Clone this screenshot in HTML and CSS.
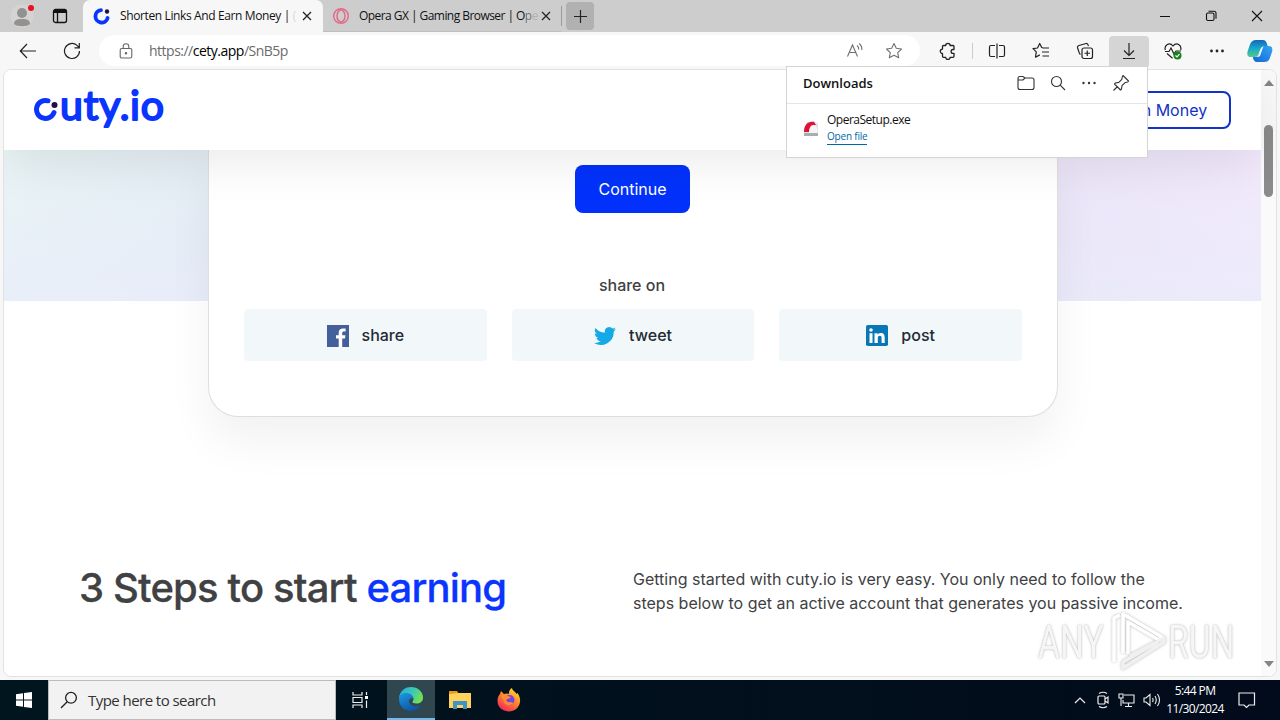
FILE: index.html
```html
<!DOCTYPE html>
<html lang="en">
<head>
  <meta charset="UTF-8">
  <meta name="viewport" content="width=device-width, initial-scale=1.0">
  <title>Shorten Links And Earn Money</title>
  <link rel="stylesheet" href="styles.css">
</head>
<body>
  <div class="titlebar">
    <svg class="profile" width="24" height="24" viewBox="0 0 24 24">
      <circle cx="12" cy="12" r="11.5" fill="#d6d3d0"/>
      <circle cx="12" cy="9" r="5" fill="#929292"/>
      <path d="M4 20c0-4 3-5 8-5s8 1 8 5c-3 3-13 3-16 0z" fill="#929292"/>
      <circle cx="21" cy="4" r="3" fill="#e81123"/>
    </svg>
    <svg class="workspaces" width="16" height="16" viewBox="0 0 16 16" fill="none" stroke="#111" stroke-width="1.3">
      <rect x="1.5" y="1.5" width="13" height="13" rx="2"/>
      <path d="M2 3.500h12" stroke-width="3"/>
      <path d="M5.500 4v10"/>
    </svg>
    <div class="tab active">
      <svg width="18" height="18" viewBox="0 0 18 18" fill="none">
        <path d="M8 3.200A6.200 6.200 0 1 0 14.600 11" stroke="#0a35ff" stroke-width="3.800" stroke-linecap="round"/>
        <circle cx="14" cy="4.500" r="2.200" fill="#251044"/>
      </svg>
      <span class="tab_title first">Shorten Links And Earn Money | <i class="faint">(</i></span>
      <svg class="close" width="10" height="10" viewBox="0 0 10 10" stroke="#222" stroke-width="1.300"><path d="M1 1l8 8M9 1l-8 8"/></svg>
    </div>
    <div class="tab">
      <svg width="18" height="18" viewBox="0 0 18 18" fill="none" stroke="#e36b85">
        <circle cx="9" cy="9" r="7.300" stroke-width="1.500"/>
        <ellipse cx="9" cy="9" rx="4" ry="6" stroke-width="1.500"/>
      </svg>
      <span class="tab_title second">Opera GX | Gaming Browser | O<i class="half">p</i><i class="faint">e</i></span>
      <svg class="close" width="10" height="10" viewBox="0 0 10 10" stroke="#222" stroke-width="1.200"><path d="M1 1l8 8M9 1l-8 8"/></svg>
    </div>
    <i class="tab_divider"></i>
    <div class="new_tab">
      <svg width="15" height="15" viewBox="0 0 15 15" stroke="#222" stroke-width="1.200"><path d="M7.500 1v13M1 7.500h13"/></svg>
    </div>
    <div class="window_buttons">
      <svg width="12" height="12" viewBox="0 0 12 12"><path d="M1 6.500h10" stroke="#111"/></svg>
      <svg width="12" height="12" viewBox="0 0 12 12" fill="none" stroke="#111" stroke-width="1.100"><rect x="1.500" y="3" width="7.500" height="7.500" rx="1.500"/><path d="M3.500 1.200H9q2 0 2 2v5.500"/></svg>
      <svg width="12" height="12" viewBox="0 0 12 12" stroke="#111" stroke-width="1.100"><path d="M1 1l10 10M11 1L1 11"/></svg>
    </div>
  </div>

  <div class="toolbar">
    <svg class="back" width="18" height="16" viewBox="0 0 18 16" fill="none" stroke="#222" stroke-width="1.200"><path d="M17 8H1.500M8 1L1.300 8 8 15"/></svg>
    <svg class="reload" width="18" height="18" viewBox="0 0 18 18" fill="none" stroke="#222" stroke-width="1.200"><path d="M16.500 9A7.500 7.500 0 1 1 14 3.400L16.200 5.600M16.300 1v4.800h-4.800"/></svg>
    <div class="address">
      <svg width="14" height="16" viewBox="0 0 14 16" fill="none" stroke="#666" stroke-width="1.100"><rect x="1.200" y="5.500" width="11.600" height="9.500" rx="1.600"/><path d="M4.200 5.500V3.600a2.800 2.800 0 0 1 5.600 0v1.900"/><circle cx="7" cy="10.200" r=".7" fill="#666"/></svg>
      <span class="url">https://<b>cety.app</b>/SnB5p</span>
      <svg class="read" width="18" height="16" viewBox="0 0 18 16" fill="none" stroke="#707070" stroke-width="1.100"><path d="M1.500 13.500L6.500 2l5 11.500M3.200 9.500h6.600M11 2.500q2 1.500 1.700 4M13.200.5q3 2.500 2.600 6.500"/></svg>
      <svg width="18" height="18" viewBox="0 0 18 18" fill="none" stroke="#707070" stroke-width="1.100" stroke-linejoin="round"><path d="M9 1.500l2.300 4.800 5.200.7-3.800 3.600 1 5.200L9 13.300l-4.700 2.500 1-5.200L1.500 7l5.200-.7z"/></svg>
    </div>
    <div class="tools">
      <svg width="18" height="18" viewBox="0 0 18 18" fill="none" stroke="#222" stroke-width="1.300" stroke-linejoin="round"><path d="M4.500 3.500h2.200a2.200 2.200 0 0 1 4.400 0H14q1 0 1 1v3h-1a1.900 1.900 0 0 0 0 3.800h1v3q0 1-1 1h-2.900a2.200 2.200 0 0 1-4.400 0H4.500q-1 0-1-1v-2.800a2.200 2.200 0 0 1 0-4.400V4.500q0-1 1-1z"/></svg>
      <i class="divider"></i>
      <svg width="18" height="18" viewBox="0 0 18 18" fill="none" stroke="#222" stroke-width="1.200"><path d="M7 3.500H3q-1.500 0-1.500 1.500v8q0 1.500 1.500 1.500h4M11 3.500h4q1.500 0 1.500 1.500v8q0 1.500-1.500 1.500h-4M9 1.500v15"/></svg>
      <svg width="18" height="18" viewBox="0 0 18 18" fill="none" stroke="#222" stroke-width="1.200" stroke-linejoin="round"><path d="M10.500 5.700L9.700 5.500 7.700 1.500 5.500 6 1 6.600l3.300 3.300-.8 5.300 4.300-2.300M10.500 6h6.500M10 10h7M10.500 14H17"/></svg>
      <svg width="18" height="18" viewBox="0 0 18 18" fill="none" stroke="#222" stroke-width="1.200"><rect x="6" y="6" width="10.500" height="10.500" rx="2"/><path d="M11.250 8.500v5.500M8.500 11.250H14M4.500 12.500C3 11.500 3 10 2.500 8.500L1.600 6q-.5-2 1.400-2.500l7-2q1.700-.3 2.500 2.500"/></svg>
      <span class="download_btn"><svg width="16" height="18" viewBox="0 0 16 18" fill="none" stroke="#222" stroke-width="1.200"><path d="M8 1v12M3 8.500l5 5 5-5M2 16.500h12"/></svg></span>
      <svg width="18" height="18" viewBox="0 0 18 18" fill="none" stroke="#222" stroke-width="1.200"><path d="M1.300 8C0 3 5.500-.5 9 4c3.500-4.500 9-1 7.700 4M1 9.500h4L7 6l3 6 2-3h5M3 11.500l5.500 4.700"/><circle cx="13.500" cy="13.500" r="4" fill="#16831e" stroke="none"/><path d="M11.500 13.500l1.500 1.400 2.500-2.700" stroke="#fff"/></svg>
      <svg class="dots" width="18" height="4" viewBox="0 0 18 4" fill="#222"><circle cx="3.500" cy="2" r="1.400"/><circle cx="9" cy="2" r="1.400"/><circle cx="14.500" cy="2" r="1.400"/></svg>
      <svg class="copilot" width="26" height="24" viewBox="0 0 26 24">
        <defs>
          <linearGradient id="cpa" x1="0" y1="0" x2="0" y2="1"><stop offset="0" stop-color="#1466bd"/><stop offset=".5" stop-color="#19a9cb"/><stop offset="1" stop-color="#52cb88"/></linearGradient>
          <linearGradient id="cpb" x1="0" y1="1" x2="1" y2="0"><stop offset="0" stop-color="#1465d8"/><stop offset="1" stop-color="#32a6f6"/></linearGradient>
        </defs>
        <path d="M9 1h7q3 0 4 4l1 3h-5q-2 0-3 3l-1.500 4.500Q10.500 18 8 18H4q-5 0-3.300-6L3 5.500Q4.500 1 9 1z" fill="url(#cpa)"/>
        <path d="M18 7h4q4.500 0 3 6l-2.300 6.500Q21.500 23 17 23h-7q-3 0-4-4v-1h3q2.500 0 3.500-3.500L15 9q.7-2 3-2z" fill="url(#cpb)"/>
        <path d="M14 9.500q.8-2 2.500-2.500L13 17q-.7 1-3 1 1.500-1 2-2.500z" fill="#edfaff"/>
      </svg>
    </div>
  </div>

  <div class="viewport">
    <div class="page">
      <header>
        <svg class="logo" width="134" height="46" viewBox="0 0 134 46">
          <path d="M14 13.800A9 9 0 1 0 20 25.500" fill="none" stroke="#0a35ff" stroke-width="5" stroke-linecap="round"/>
          <circle cx="20.500" cy="18" r="3" fill="#251044"/>
          <text x="26" y="33" textLength="104">uty.io</text>
        </svg>
        <a class="earn">Earn Money</a>
      </header>
      <section class="hero">
        <div class="card">
          <button class="continue">Continue</button>
          <p class="share_label">share on</p>
          <div class="share_row">
            <a>
              <svg width="22" height="22" viewBox="0 0 22 22"><path fill="#43609c" d="M0 0h22v22H0z"/><path fill="#fff" d="M11.700 22v-8.500H9v-3.300h2.700V7.800c0-3 1.800-4.300 4.400-4.300 1.200 0 2.200.1 2.500.1v3h-1.700c-1.400 0-1.700.7-1.700 1.700v1.900h3.200l-.4 3.300h-2.800V22z"/></svg>
              share
            </a>
            <a>
              <svg width="22" height="22" viewBox="0 0 24 24"><path fill="#15a9e5" d="M24 4.600a10 10 0 0 1-2.800.8 5 5 0 0 0 2.200-2.700c-1 .5-2 1-3.100 1.200a4.900 4.900 0 0 0-8.400 4.500C7.700 8.200 4.100 6.300 1.700 3.200a4.900 4.900 0 0 0 1.500 6.500c-.8 0-1.600-.2-2.200-.6a4.900 4.900 0 0 0 3.900 4.900c-.7.200-1.500.2-2.200.1a4.900 4.900 0 0 0 4.600 3.400A9.900 9.900 0 0 1 0 19.500 14 14 0 0 0 21.500 7.100c1-.7 1.800-1.500 2.500-2.500z"/></svg>
              tweet
            </a>
            <a>
              <svg width="22" height="22" viewBox="0 0 22 22"><rect width="22" height="21" rx="1.800" fill="#0877b5"/><path fill="#fff" d="M3.500 8.300h3V18h-3zM8.500 8.300h3v1.400c.5-.9 1.600-1.700 3.200-1.700 3.300 0 4 2 4 5v5h-3.100v-4.600c0-1.200-.1-2.600-1.800-2.600-1.700 0-2 1.200-2 2.500V18H8.500z"/><circle cx="5" cy="5" r="1.800" fill="#fff"/></svg>
              post
            </a>
          </div>
        </div>
      </section>
      <section class="steps">
        <h2>3 Steps to start <em>earning</em></h2>
        <p>Getting started with cuty.io is very easy. You only need to follow the<br>steps below to get an active account that generates you passive income.</p>
      </section>
    </div>
    <div class="scrollbar">
      <svg width="10" height="6" viewBox="0 0 10 6"><path d="M0 6l5-6 5 6z" fill="#858585"/></svg>
      <i class="thumb"></i>
      <svg width="10" height="6" viewBox="0 0 10 6"><path d="M0 0l5 6 5-6z" fill="#858585"/></svg>
    </div>
  </div>

  <div class="taskbar">
    <div class="start"><svg width="16" height="16" viewBox="0 0 16 16" fill="#fff"><path d="M0 2.200l7-1v6.300H0zM8 1l8-1v7.500H8zM0 8.500h7v6.300l-7-1zM8 8.500h8V16l-8-1z"/></svg></div>
    <div class="search">
      <svg width="18" height="18" viewBox="0 0 18 18" fill="none" stroke="#222" stroke-width="1.300"><circle cx="11" cy="6.800" r="5.400"/><path d="M7.200 10.700L1 17"/></svg>
      <span>Type here to search</span>
    </div>
    <div class="task view"><svg width="18" height="18" viewBox="0 0 18 18" fill="none" stroke="#eee" stroke-width="1.200"><path d="M2 1v3h9V1M2 17v-3h9v3M2 6.500h9v5H2zM15.500 1v3M15.500 9.500V17"/><path d="M14 5h3v3h-3z" fill="#fff" stroke="none"/></svg></div>
    <div class="task current">
      <svg width="26" height="26" viewBox="0 0 26 26">
        <defs>
          <linearGradient id="eda" x1="0" y1="0" x2="1" y2=".4"><stop offset="0" stop-color="#2ba8df"/><stop offset=".6" stop-color="#3bc9b6"/><stop offset="1" stop-color="#72df55"/></linearGradient>
          <linearGradient id="edb" x1="0" y1="0" x2=".6" y2="1"><stop offset="0" stop-color="#199be2"/><stop offset="1" stop-color="#1052a6"/></linearGradient>
        </defs>
        <path d="M1 12C2 4 8 1 13 1c7 0 12 5 12 10.500 0 4-3 6-6.500 6-3 0-4.500-1-4-2 2-2 1-6-3.500-7C7 7.500 3 8.500 1 12z" fill="url(#eda)"/>
        <path d="M1 13c0-4.500 4-6.500 8-6 4 .4 6.500 3 6.500 6-3-2-5 .5-4.500 3 .7 4 6 6 12 3-2 3.500-5.500 6-10 6C6 25 1 20 1 13z" fill="url(#edb)"/>
      </svg>
    </div>
    <div class="task"><svg width="22" height="20" viewBox="0 0 22 20"><path d="M0 1h8l2 3H0z" fill="#e99a18"/><path d="M0 4l10-1h12v15H0z" fill="#ffd25c"/><path d="M4 19v-8h14v8h-4v-4H8v4z" fill="#3c94ca"/></svg></div>
    <div class="task">
      <svg width="24" height="24" viewBox="0 0 24 24">
        <defs><linearGradient id="ff" x1=".9" y1="0" x2=".3" y2="1"><stop offset="0" stop-color="#ffe43c"/><stop offset=".45" stop-color="#ff9127"/><stop offset="1" stop-color="#f3265a"/></linearGradient></defs>
        <path d="M3 6l1-3 3 3q3-1 5 0c-.5-2.500 1-5 3-6 .5 3 3 3 4.500 6l1-1c2 3 3 6 2.500 9-1 6-5.500 9.500-11 9.500S1 20 .6 14C.3 11 1 8 3 6z" fill="url(#ff)"/>
        <circle cx="12.500" cy="12" r="5" fill="#7542e5"/>
        <path d="M4 8q4-3 7 0l3 1q-1 2-4 2c-2 2 1 4 3.500 3l3 1c-4 4-10 2-10-3z" fill="#ff8a30"/>
      </svg>
    </div>
    <div class="tray">
      <svg width="12" height="8" viewBox="0 0 12 8" fill="none" stroke="#eee" stroke-width="1.200"><path d="M1 7l5-5 5 5"/></svg>
      <svg width="14" height="18" viewBox="0 0 14 18" fill="none" stroke="#eee" stroke-width="1.200"><rect x="2" y="5" width="7" height="8" rx="1"/><path d="M9 8l3-2v6l-3-2M3 2.500q4-2.500 8 0M3 15.500q4 2.500 8 0"/></svg>
      <svg width="17" height="16" viewBox="0 0 17 16" fill="none" stroke="#eee" stroke-width="1.100"><path d="M6 3h10v8H5V8M10.500 11v3M7 14.500h7M1 2h4v4H1zM3 6v8"/></svg>
      <svg width="18" height="14" viewBox="0 0 18 14" fill="none" stroke="#eee" stroke-width="1.100"><path d="M1 5h2l4-3.500v11L3 9H1zM9.500 5q1.300 2 0 4M12 3q2.500 4 0 8M14.500 1q4 6 0 12"/></svg>
      <div class="clock">5:44 PM<br>11/30/2024</div>
      <svg width="18" height="18" viewBox="0 0 18 18" fill="none" stroke="#eee" stroke-width="1.200"><path d="M1 2h15.500v12H11l-2.500 2.500L6 14H1z"/></svg>
    </div>
  </div>

  <div class="downloads">
    <div class="downloads_head">
      <strong>Downloads</strong>
      <svg width="18" height="16" viewBox="0 0 18 16" fill="none" stroke="#333" stroke-width="1.100"><path d="M1 3.500q0-2 2-2h3l2 1.500h7q2 0 2 2v7.500q0 2-2 2H3q-2 0-2-2zM1 5h5l2-2"/></svg>
      <svg width="16" height="16" viewBox="0 0 16 16" fill="none" stroke="#333" stroke-width="1.100"><circle cx="6.500" cy="6.500" r="5"/><path d="M10.200 10.200L15 15"/></svg>
      <svg width="16" height="4" viewBox="0 0 16 4" fill="#333"><circle cx="2.500" cy="2" r="1.200"/><circle cx="8" cy="2" r="1.200"/><circle cx="13.500" cy="2" r="1.200"/></svg>
      <svg width="18" height="18" viewBox="0 0 18 18" fill="none" stroke="#333" stroke-width="1.100" stroke-linejoin="round"><path d="M11 1.500l5.500 5.500-1 1-2.500.7-3 3-.5 3.300-1 1-6-6 1-1 3.300-.6 3-3L10.400 2.500zM5.500 12.500L1.500 16.500"/></svg>
    </div>
    <div class="downloads_item">
      <svg width="16" height="16" viewBox="0 0 16 16"><path d="M4 2l7-1 4 3v10H1V8z" fill="#dfe2e5"/><path d="M1 12C1 5 5 1 11 2l2 3q-6-1-7 7z" fill="#df1236"/><path d="M6 13c0-5 1.500-8 4.500-8s4 3 4 8z" fill="#f5f5f5"/><path d="M1 13h14v3H1z" fill="#a9adb0"/></svg>
      <div>
        <p>OperaSetup.exe</p>
        <a>Open file</a>
      </div>
    </div>
  </div>

  <div class="watermark">
    <span class="any">ANY</span>
    <svg width="58" height="64" viewBox="0 0 58 64" fill="none" stroke="#fff" stroke-width="3.500" stroke-linejoin="round">
      <path d="M4 52V8l6-3"/>
      <path d="M13 43V4l39 23-3 3-31-18v32"/>
      <path d="M20 46l34-18v4L13 58V52l35-20" stroke="#f0f0f0"/>
    </svg>
    <span class="run">RUN</span>
  </div>
</body>
</html>
```

FILE: styles.css
```css
* {
  box-sizing: border-box;
}

body {
  margin: 0;
  width: 1280px;
  height: 720px;
  overflow: hidden;
  display: flex;
  flex-direction: column;
  position: relative;
  background: #f7f7f7;
  font-family: "Open Sans", "Noto Sans", sans-serif;
  font-size: 12px;
  color: #111;
}

p, h2 {
  margin: 0;
}

svg {
  display: block;
  flex: none;
}

/* browser tabs */
.titlebar {
  height: 32px;
  flex: none;
  display: flex;
  align-items: center;
  background: #cdcdcd;
}

.profile {
  margin-left: 10px;
  overflow: visible;
}

.workspaces {
  margin: 0 15px 0 18px;
}

.tab {
  width: 238px;
  height: 32px;
  display: flex;
  align-items: center;
  padding: 0 10px 0 9px;
  border-bottom: 1px solid #bdbdbd;
}

.tab.active {
  width: 240px;
  background: #f7f7f7;
  padding: 0 11px 0 10px;
  border: none;
  border-radius: 7px 7px 0 0;
}

.tab_title {
  margin-left: 9px;
  white-space: nowrap;
  line-height: 18px;
}

.tab_title i {
  font-style: normal;
}

.half {
  opacity: .5;
}

.faint {
  opacity: .15;
}

.first {
  letter-spacing: -.38px;
}

.second {
  letter-spacing: -.55px;
}

.close {
  margin-left: auto;
}

.tab_divider {
  width: 1px;
  height: 20px;
  background: #999;
}

.new_tab {
  width: 28px;
  height: 28px;
  margin-left: 4px;
  border-radius: 4px;
  background: #b1b1b1;
  display: flex;
  align-items: center;
  justify-content: center;
}

.window_buttons {
  margin-left: auto;
  padding-right: 17px;
  display: flex;
  gap: 34px;
}

/* toolbar */
.toolbar {
  height: 37px;
  flex: none;
  display: flex;
  align-items: center;
}

.back {
  margin-left: 19px;
}

.reload {
  margin-left: 26px;
}

.address {
  width: 821px;
  height: 31px;
  margin-left: 18px;
  padding: 0 17px 0 20px;
  display: flex;
  align-items: center;
  border-radius: 16px;
  background: #fff;
}

.url {
  margin-left: 16px;
  font-size: 14px;
  letter-spacing: -.5px;
  color: #6b6b6b;
}

.url b {
  font-weight: 400;
  color: #000;
}

.read {
  margin-left: auto;
  margin-right: 21px;
}

.tools {
  flex: 1;
  display: flex;
  align-items: center;
  padding-left: 19px;
  gap: 26px;
}

.divider {
  width: 1px;
  height: 16px;
  background: #ccc;
  margin: 0 -11px;
}

.download_btn {
  width: 40px;
  height: 30px;
  margin: 0 -11px;
  border-radius: 4px 4px 0 0;
  background: #d5d5d5;
  display: flex;
  align-items: center;
  justify-content: center;
}

.copilot {
  margin-left: -5px;
}

/* web page */
.viewport {
  height: 608px;
  flex: none;
  margin: 0 3px 3px;
  display: flex;
  background: #fff;
  border: 1px solid #e2e2e2;
  border-radius: 8px;
  overflow: hidden;
}

.page {
  width: 1257px;
  font-family: Inter, "Liberation Sans", sans-serif;
  font-size: 16px;
  color: #404143;
}

header {
  height: 80px;
  padding: 0 30px;
  position: relative;
  z-index: 1;
  display: flex;
  align-items: center;
  justify-content: space-between;
  background: #fff;
  box-shadow: 0 10px 50px rgba(0, 0, 0, .09);
}

.logo text {
  font-family: Lato, sans-serif;
  font-size: 41px;
  fill: #0a35ff;
  stroke: #0a35ff;
  stroke-width: 2px;
  stroke-linejoin: round;
}

.earn {
  width: 136px;
  height: 38px;
  border: 2px solid #1232c8;
  border-radius: 8px;
  padding-right: 2px;
  line-height: 34px;
  text-align: center;
  color: #1232c8;
}

.hero {
  height: 151px;
  background: linear-gradient(rgba(233, 236, 251, 0), rgba(233, 236, 251, .7)), linear-gradient(to right, #e9f4f5, #e4edf4 17%, #ebe3f7 83%, #f2e8fc);
}

.card {
  width: 850px;
  height: 267px;
  margin-left: 204px;
  padding: 15px 35px 0;
  border: 1px solid #dedede;
  border-top: none;
  border-radius: 0 0 30px 30px;
  background: #fff;
  box-shadow: 0 25px 45px rgba(0, 0, 0, .055);
  text-align: center;
}

.continue {
  display: block;
  width: 115px;
  height: 48px;
  margin: 0 0 0 331px;
  padding: 0;
  border: none;
  border-radius: 8px;
  background: #0231fb;
  color: #fff;
  font: inherit;
}

.share_label {
  margin-top: 60px;
  padding-right: 2px;
  line-height: 24px;
  font-weight: 500;
}

.share_row {
  margin-top: 12px;
  display: grid;
  grid-template-columns: repeat(3, 1fr);
  gap: 25px;
}

.share_row a {
  height: 52px;
  display: flex;
  align-items: center;
  justify-content: center;
  gap: 13px;
  border-radius: 4px;
  background: #f2f7fa;
  font-weight: 500;
  color: #222b33;
}

.share_row svg {
  margin-top: 1px;
}

.steps {
  display: flex;
  padding: 266px 75px 0;
}

.steps h2 {
  width: 554px;
  margin-top: -3px;
  font-size: 40px;
  line-height: 48px;
  font-weight: 500;
  letter-spacing: -.84px;
  white-space: nowrap;
  -webkit-text-stroke: .3px;
}

.steps em {
  font-style: normal;
  color: #0a35ff;
}

.steps p {
  line-height: 24px;
  white-space: nowrap;
}

.scrollbar {
  width: 15px;
  padding: 10px 0 9px;
  display: flex;
  flex-direction: column;
  align-items: center;
  background: #fafafa;
}

.thumb {
  width: 9px;
  height: 72px;
  margin: 39px 0 auto;
  border-radius: 5px;
  background: #8b8b8b;
}

/* taskbar */
.taskbar {
  height: 40px;
  flex: none;
  display: flex;
  background: linear-gradient(to right, #00151e, #020b1b);
}

.start, .task {
  width: 48px;
  display: flex;
  align-items: center;
  justify-content: center;
}

.task {
  width: 49px;
}

.view {
  width: 48px;
  margin-right: 3px;
}

.current {
  width: 48px;
  background: #304750;
  border-bottom: 2px solid #76b9ed;
}

.search {
  width: 288px;
  padding-left: 11px;
  display: flex;
  align-items: center;
  gap: 10px;
  background: #f2f2f2;
  border: 1px solid #bbb;
  font-size: 15px;
  letter-spacing: -.55px;
  color: #333;
}

.tray {
  margin-left: auto;
  padding-right: 24px;
  display: flex;
  align-items: center;
  gap: 8px;
  color: #fff;
}

.tray > svg:nth-child(2) {
  margin-left: 2px;
}

.clock {
  width: 62px;
  margin: -1px 4px 0 -5px;
  text-align: center;
  line-height: 18px;
  letter-spacing: -.6px;
}

/* downloads flyout */
.downloads {
  position: absolute;
  z-index: 3;
  left: 786px;
  top: 66px;
  width: 362px;
  height: 92px;
  background: #fff;
  border: 1px solid #d4d4d4;
}

.downloads_head {
  height: 37px;
  padding: 0 17px 4px 16px;
  display: flex;
  align-items: center;
  gap: 15px;
  border-bottom: 1px solid #e5e5e5;
}

.downloads_head strong {
  margin-right: auto;
  font-size: 13px;
  font-weight: 600;
  letter-spacing: 0;
}

.downloads_item {
  display: flex;
  padding: 7px 16px;
  gap: 8px;
}

.downloads_item > svg {
  margin-top: 9px;
}

.downloads_item p {
  line-height: 17px;
  letter-spacing: -.5px;
}

.downloads_item a {
  display: block;
  width: max-content;
  font-size: 10px;
  line-height: 16px;
  letter-spacing: -.2px;
  color: #0067a8;
  border-bottom: 1px solid #0067a8;
}

/* translucent stamp over the page */
.watermark {
  position: absolute;
  z-index: 2;
  left: 1038px;
  top: 610px;
  display: flex;
  align-items: center;
  font-family: Roboto, sans-serif;
  font-size: 46px;
  line-height: 64px;
  color: #f6f6f6;
  text-shadow: 0 0 3px #bbb, 0 0 1px #ccc;
}

.watermark svg {
  filter: drop-shadow(0 0 1.5px #bbb);
}

.any, .run {
  width: 66px;
  transform: scaleX(.73);
  transform-origin: left;
}

.any {
  margin-right: 6px;
}
```
